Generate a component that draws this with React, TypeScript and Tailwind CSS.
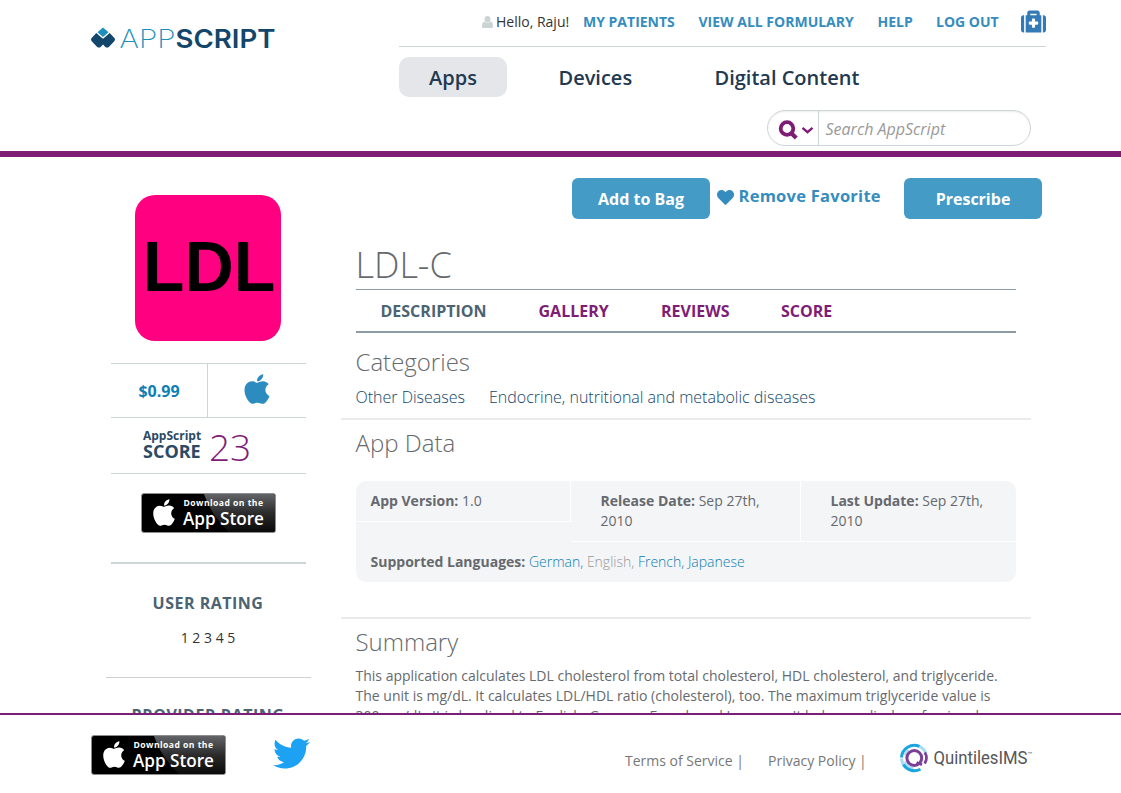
import React from "react";
import { FaApple, FaHeart, FaMedkit, FaTwitter } from "react-icons/fa";

function Logo() {
  return (
    <svg width="186" height="28" viewBox="0 0 186 28" className="block overflow-visible">
      <path d="M13 2.5 L18.5 7.3 L13 12 L7.5 7.3 Z" fill="#1b8fbd" />
      <path d="M6.3 8 L12.6 13.6 L13.4 13.6 L19.7 8 L24.6 13.2 Q25.6 14.8 24.3 16.2 L18.8 22 Q17 23.2 15.4 22 L13 19.6 L10.6 22 Q9 23.2 7.2 22 L1.7 16.2 Q0.4 14.8 1.4 13.2 Z" fill="#12466b" />
      <text x="29.5" y="22.6" fontFamily="Inter" fontWeight="200" fontSize="25" textLength="56" lengthAdjust="spacingAndGlyphs" fill="#1b8fbd">APP</text>
      <text x="85.5" y="22.6" fontFamily="Inter" fontWeight="600" fontSize="25" textLength="100" lengthAdjust="spacingAndGlyphs" fill="#12466b">SCRIPT</text>
    </svg>
  );
}

function StoreBadge({ id }: { id: string }) {
  return (
    <svg width="135" height="40" viewBox="0 0 135 40" className="block shrink-0">
      <defs>
        <linearGradient id={id} x1="0" y1="0" x2="0" y2="1">
          <stop offset="0" stopColor="#626467" />
          <stop offset="0.5" stopColor="#2b2b2c" />
          <stop offset="1" stopColor="#0a0a0a" />
        </linearGradient>
      </defs>
      <rect x="0.5" y="0.5" width="134" height="39" rx="2.5" fill="#000" stroke="#8b8f90" />
      <path d="M63 1 H132 Q134 1 134 3 V37 Q134 39 132 39 H88 Q70 22 63 1 Z" fill={"url(#" + id + ")"} />
      <svg x="12" y="5.5" width="22" height="28" viewBox="0 20 384 472" preserveAspectRatio="none">
        <FaApple color="#fff" width="384" height="512" size="512" x="-64" />
      </svg>
      <text x="42.5" y="13" fontFamily="Open Sans" fontWeight="700" fontSize="8.6" textLength="79.5" fill="#fff">Download on the</text>
      <text x="42" y="32" fontFamily="Open Sans" fontWeight="600" fontSize="17.6" textLength="81" lengthAdjust="spacingAndGlyphs" fill="#fff">App Store</text>
    </svg>
  );
}

function QuintilesLogo() {
  return (
    <svg width="134" height="32" viewBox="0 0 134 32" className="block shrink-0 overflow-visible">
      <g fill="none">
        <path d="M19.5 4.4 A12.8 12.8 0 0 1 26 11.5 M1.5 16.5 A12.8 12.8 0 0 0 3.6 23" stroke="#a9dcf3" strokeWidth="3" />
        <path d="M5 19.5 A10 10 0 0 0 13.5 26 M5 13 A10 10 0 0 1 8.5 8" stroke="#a9dcf3" strokeWidth="2.2" />
        <path d="M1.5 15.5 A12.8 12.8 0 0 1 19.5 4.4" stroke="#1ba6e0" strokeWidth="3" />
        <path d="M3.4 22.5 A12.8 12.8 0 0 0 20.5 27.2" stroke="#1ba6e0" strokeWidth="3" />
        <circle cx="14.3" cy="16" r="7.4" stroke="#7c3f98" strokeWidth="3" />
        <path d="M16.5 20.5 L22 22.8 M24.8 10.5 Q28.3 16 24.6 21.5" stroke="#7c3f98" strokeWidth="2.7" />
      </g>
      <text x="33.5" y="21.5" fontFamily="Roboto" fontWeight="400" fontSize="18" textLength="94" lengthAdjust="spacingAndGlyphs" fill="#55565a">QuintilesIMS</text>
      <text x="127.8" y="14" fontFamily="Roboto" fontSize="6" textLength="5" lengthAdjust="spacingAndGlyphs" fill="#55565a">™</text>
    </svg>
  );
}

function Header() {
  return (
    <header className="flex h-[157px] border-b-[6px] border-[#7e1d76] pl-[90px]">
      <div className="w-[309px] pt-[25px]"><Logo /></div>
      <div className="w-[647px]">
        <div className="flex h-[47px] items-center border-b border-[#cdd5d6] pb-[3px] pl-[83px] text-[14px] font-bold text-[#348dbe]">
          <svg width="11" height="12" viewBox="0 0 11 12" className="mr-[3px]" fill="#cbd3d3">
            <ellipse cx="5.5" cy="3.2" rx="2.9" ry="3.2" />
            <path d="M2.2 5.6 Q5.5 8 8.8 5.6 Q11 6.2 11 9.4 V10.5 Q11 12 9.4 12 H1.6 Q0 12 0 10.5 V9.4 Q0 6.2 2.2 5.6" />
          </svg>
          <span className="w-[87px] font-normal text-[#333]">Hello, Raju!</span>
          <a className="w-[115.5px]">MY PATIENTS</a>
          <a className="w-[179px]">VIEW ALL FORMULARY</a>
          <a className="w-[58.5px]">HELP</a>
          <a className="w-[85px]">LOG OUT</a>
          <FaMedkit size={25} color="#337ab7" className="-mt-px shrink-0" />
        </div>
        <nav className="mt-[10px] flex h-[40px] items-center text-[20px] font-semibold text-[#22394f]">
          <a className="flex h-[40px] w-[108px] items-center justify-center rounded-[10px] bg-[#e4e6ea] pt-[2px]">Apps</a>
          <a className="ml-[51.5px] w-[156px] pt-[2px]">Devices</a>
          <a className="pt-[2px]">Digital Content</a>
        </nav>
        <div className="ml-[368px] mt-[13px] flex h-[36px] w-[264px] rounded-[18px] border border-[#cdd5d6] shadow-[inset_0_1px_2px_rgba(0,0,0,0.08)]">
          <div className="flex w-[51px] items-center border-r border-[#cdd5d6] pl-[10px] pt-[4px]">
            <svg width="37" height="20" viewBox="0 0 37 20" fill="none" stroke="#7e1d76">
              <circle cx="9" cy="8.5" r="6.3" strokeWidth="3.8" />
              <path d="M13 13 L18.3 18" strokeWidth="4.2" />
              <path d="M24.5 7.8 L29.5 12.2 L34.5 7.8" strokeWidth="2.4" />
            </svg>
          </div>
          <span className="pl-[6.5px] text-[16px] leading-[36px] text-[#999] italic">Search AppScript</span>
        </div>
      </div>
    </header>
  );
}

function Sidebar() {
  return (
    <aside className="flex w-[205px] shrink-0 flex-col items-center pt-[38px]">
      <svg width="146" height="146" viewBox="0 0 146 146" className="mr-px block shrink-0">
        <rect width="146" height="146" rx="20" fill="#ff0080" />
        <text x="7.8" y="95.5" fontFamily="Liberation Sans" fontWeight="700" fontSize="70.5" textLength="132.5" lengthAdjust="spacingAndGlyphs" fill="#000">LDL</text>
      </svg>
      <div className="mt-[22px] flex h-[55px] w-[195px] shrink-0 border-y border-[#cdd5d6]">
        <div className="flex w-[97px] items-center justify-center border-r border-[#cdd5d6] text-[16px] font-bold text-[#0d80b5]">$0.99</div>
        <div className="flex flex-1 items-center justify-center pb-[3px]"><FaApple size={34} color="#2d8cbf" /></div>
      </div>
      <div className="flex h-[56px] w-[195px] shrink-0 border-b border-[#cdd5d6] pl-[32px] font-bold text-[#2b4a66]">
        <div className="w-[66px] pt-[9px]">
          <div className="text-[12px] leading-[17px] whitespace-nowrap">AppScript</div>
          <div className="text-[18px] leading-[15px]">SCORE</div>
        </div>
        <div className="text-[37px] leading-[57px] font-light text-[#7e1d76]">23</div>
      </div>
      <div className="flex h-[90px] w-[195px] shrink-0 justify-center border-b-2 border-[#cdd5d6] pt-[19px]"><StoreBadge id="gloss-side" /></div>
      <div className="mt-[28px] mr-px shrink-0 text-[16px] leading-[22px] font-bold tracking-[0.5px] text-[#4c6472]">USER RATING</div>
      <div className="mt-[14px] mr-px shrink-0 text-[14px] leading-[20px] text-[#333]">1 2 3 4 5</div>
      <div className="mt-[29px] w-[205px] shrink-0 border-b border-[#cfd0d2]" />
      <div className="mt-[26px] mr-px shrink-0 text-[16px] leading-[22px] font-bold tracking-[0.5px] whitespace-nowrap text-[#4c6472]">PROVIDER RATING</div>
    </aside>
  );
}

function Details() {
  return (
    <section className="ml-[30px] w-[701px] shrink-0 whitespace-nowrap text-[#66696e]">
      <div className="flex h-[62px] pl-[231px] pt-[21px] text-[16px] font-bold">
        <button className="h-[41px] w-[138px] shrink-0 rounded-[6px] bg-[#439bc6] text-white">Add to Bag</button>
        <div className="flex h-[36px] w-[194px] shrink-0 items-center pl-[7px] text-[16.5px] tracking-[0.25px] text-[#348dbe]">
          <FaHeart size={17} className="mr-[4.5px] mt-[2px]" />Remove Favorite
        </div>
        <button className="h-[41px] w-[138px] shrink-0 rounded-[6px] bg-[#439bc6] text-white">Prescribe</button>
      </div>
      <div className="px-[15px]">
        <h1 className="mt-[20px] -ml-[0.5px] h-[50px] text-[36px] leading-[52px] font-light">LDL-C</h1>
        <div className="flex h-[44px] w-[660px] border-t border-b-2 border-[#8d9ba6] pl-[24.5px] text-[16px] leading-[43px] font-bold text-[#7e1d76]">
          <span className="w-[158px] text-[#4c6472]">DESCRIPTION</span>
          <span className="w-[122.5px]">GALLERY</span>
          <span className="w-[120px]">REVIEWS</span>
          <span>SCORE</span>
        </div>
        <h2 className="mt-[12px] -ml-[0.5px] text-[24px] leading-[34px] font-light">Categories</h2>
        <div className="mt-[6px] -ml-[0.5px] flex h-[33px] text-[16px] leading-[24px] font-light text-[#12466b]">
          <span className="w-[133.5px]">Other Diseases</span>
          <span>Endocrine, nutritional and metabolic diseases</span>
        </div>
      </div>
      <div className="w-[690px] border-t-2 border-[#ebebeb] px-[15px]">
        <h2 className="mt-[6px] -ml-[0.5px] text-[24px] leading-[34px] font-light">App Data</h2>
        <div className="mt-[21px] h-[101px] w-[660px] overflow-hidden rounded-[10px] bg-[#f4f5f7] text-[14px] leading-[20px]">
          <div className="flex h-[61px] items-start">
            <div className="h-[41px] w-[215px] border-r border-b border-white pt-[10px] pl-[14.5px]"><b>App Version:</b> 1.0</div>
            <div className="h-[61px] w-[230px] border-r border-b border-white pt-[10px] pl-[29.5px]"><b>Release Date:</b> Sep 27th,<br />2010</div>
            <div className="h-[61px] w-[215px] border-b border-white pt-[10px] pl-[29.5px]"><b>Last Update:</b> Sep 27th,<br />2010</div>
          </div>
          <div className="pt-[10px] pl-[14.5px] font-light"><b className="font-bold">Supported Languages:</b> <span className="text-[#0d80b5]">German,</span> <span className="text-[#999]">English,</span> <span className="text-[#0d80b5]">French, Japanese</span></div>
        </div>
      </div>
      <div className="mt-[35px] w-[690px] border-t-2 border-[#ebebeb] px-[15px]">
        <h2 className="mt-[6px] -ml-[0.5px] text-[24px] leading-[34px] font-light">Summary</h2>
        <p className="mt-[7px] -ml-[0.5px] text-[14px] leading-[20px]">
          This application calculates LDL cholesterol from total cholesterol, HDL cholesterol, and triglyceride.<br />
          The unit is mg/dL. It calculates LDL/HDL ratio (cholesterol), too. The maximum triglyceride value is<br />
          300 mg/dL. It is localized to English, German, French and Japanese. It helps medical professionals
        </p>
      </div>
    </section>
  );
}

function Footer() {
  return (
    <footer className="flex h-[80px] items-start border-t-2 border-[#7e1d76] bg-white pl-[91px] text-[14px] text-[#777]">
      <div className="pt-[20px]"><StoreBadge id="gloss-footer" /></div>
      <FaTwitter size={37} color="#1da1f2" className="mt-[20px] ml-[47px] shrink-0" />
      <span className="mt-[36px] ml-[315px] w-[143px] leading-[20px]">Terms of Service |</span>
      <span className="mt-[36px] w-[132px] leading-[20px]">Privacy Policy |</span>
      <div className="mt-[27px]"><QuintilesLogo /></div>
    </footer>
  );
}

export default function App() {
  return (
    <div className="h-[793px] w-[1121px] overflow-hidden bg-white font-['Open_Sans',sans-serif]">
      <Header />
      <main className="flex h-[556px] overflow-hidden pl-[106px]">
        <Sidebar />
        <Details />
      </main>
      <Footer />
    </div>
  );
}
